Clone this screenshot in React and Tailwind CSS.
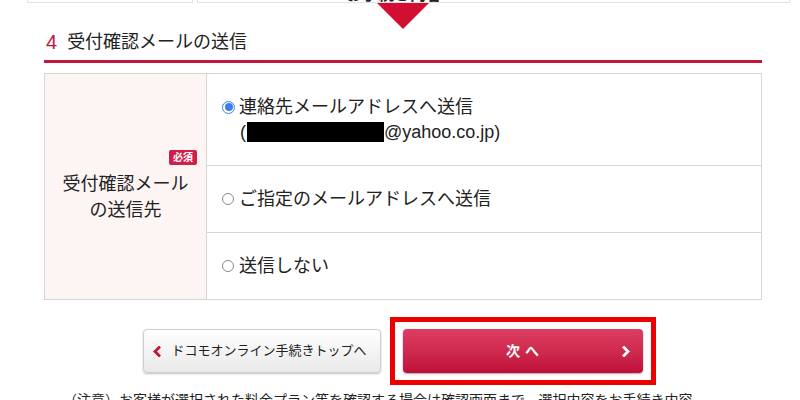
import React from "react";

const font = { fontFamily: '"Liberation Sans", "Noto Sans CJK JP", sans-serif' };

function Radio({ checked }) {
  return checked ? (
    <span className="flex h-[13px] w-[13px] shrink-0 items-center justify-center rounded-full border border-[#3b7ef0] bg-white">
      <span className="h-[8px] w-[8px] rounded-full bg-[#3b7ef0]"></span>
    </span>
  ) : (
    <span className="h-[12px] w-[12px] shrink-0 rounded-full border border-[#8a8a8a] bg-white"></span>
  );
}

function Chevron({ dir = "right", color }) {
  return (
    <svg width="8" height="11" viewBox="0 0 8 11" className="shrink-0">
      <path
        d={dir === "right" ? "M2 1.5 L6 5.5 L2 9.5" : "M6 1.5 L2 5.5 L6 9.5"}
        fill="none"
        stroke={color}
        strokeWidth="2.8"
        strokeLinecap="square"
      />
    </svg>
  );
}

export default function App() {
  return (
    <div className="h-[400px] w-[800px] overflow-hidden bg-white text-[#222]" style={font}>
      {/* bottom edge of previous section */}
      <div className="ml-[27px] flex h-[3px] w-[763px] gap-[4px]">
        <div className="w-[166px] border-x border-b border-[#e2e2e2]"></div>
        <div className="flex-1 overflow-hidden border-x border-b border-[#e2e2e2] pl-[148px]">
          <div className="-mt-[13px] text-[16px] leading-[16px] font-bold">お手続き内容</div>
        </div>
      </div>

      {/* arrow */}
      <div className="flex justify-center pl-[6px]">
        <svg width="52" height="26" viewBox="0 0 52 26">
          <polygon points="0,0 52,0 26,26" fill="#d20f30" />
        </svg>
      </div>

      <div className="ml-[44px] w-[718px]">
        {/* heading */}
        <div className="mt-[1px] flex items-center pl-[2px] leading-[24px]">
          <span className="text-[20px] text-[#c8103a]">4</span>
          <span className="ml-[10px] text-[18px]">受付確認メールの送信</span>
        </div>
        <div className="mt-[6px] h-[3px] bg-[#c4163c]"></div>

        {/* table */}
        <div className="mt-[10px] grid grid-cols-[162px_1fr] border border-[#d6d6d6]">
          <div className="flex flex-col items-center justify-center border-r border-[#d6d6d6] bg-[#fdf5f3]">
            <span className="mr-[9px] self-end rounded-[2px] bg-[#d11d49] px-[4px] text-[10px] leading-[15px] font-bold text-white">
              必須
            </span>
            <div className="mt-[6px] text-center text-[18px] leading-[26px]">
              受付確認メール
              <br />
              の送信先
            </div>
          </div>
          <div className="flex flex-col text-[18px]">
            <div className="flex h-[92px] items-center border-b border-[#d6d6d6] pl-[15px]">
              <div className="flex flex-col leading-[25px]">
                <div className="flex items-center gap-[4px]">
                  <Radio checked />
                  <span>連絡先メールアドレスへ送信</span>
                </div>
                <div className="flex items-center pl-[18px]">
                  <span>(</span>
                  <span className="ml-[1px] h-[20px] w-[137px] bg-black"></span>
                  <span>@yahoo.co.jp)</span>
                </div>
              </div>
            </div>
            <div className="flex h-[67px] items-center gap-[5px] border-b border-[#d6d6d6] pl-[15px]">
              <Radio />
              <span>ご指定のメールアドレスへ送信</span>
            </div>
            <div className="flex h-[66px] items-center gap-[5px] pl-[15px]">
              <Radio />
              <span>送信しない</span>
            </div>
          </div>
        </div>
      </div>

      {/* buttons */}
      <div className="mt-[17px] flex items-center justify-center gap-[9px] pr-[2px]">
        <button
          type="button"
          className="flex h-[44px] w-[238px] items-center gap-[11px] rounded-[4px] border border-[#cfcfcf] bg-gradient-to-b from-white to-[#e9e9e9] pl-[9px] text-[13px] text-[#222] shadow-[0_1px_2px_rgba(0,0,0,0.25)]"
        >
          <Chevron dir="left" color="#c8103a" />
          <span>ドコモオンライン手続きトップへ</span>
        </button>
        <div className="border-[5px] border-[#ee0000] px-[8px] py-[7px]">
          <button
            type="button"
            className="grid h-[44px] w-[240px] grid-cols-[1fr_auto_1fr] items-center rounded-[4px] bg-gradient-to-b from-[#dd3d62] to-[#bf0d3a] text-[14px] font-bold text-white shadow-[0_1px_2px_rgba(0,0,0,0.35)]"
          >
            <span></span>
            <span className="tracking-[5px] pl-[5px]">次へ</span>
            <span className="flex justify-end pr-[13px]">
              <Chevron color="#ffffff" />
            </span>
          </button>
        </div>
      </div>

      {/* cut-off note */}
      <div className="mt-[5px] pl-[63px] text-[14px] leading-[20px] whitespace-nowrap">
        （注意）お客様が選択された料金プラン等を確認する場合は確認画面まで、選択内容をお手続き内容
      </div>
    </div>
  );
}
